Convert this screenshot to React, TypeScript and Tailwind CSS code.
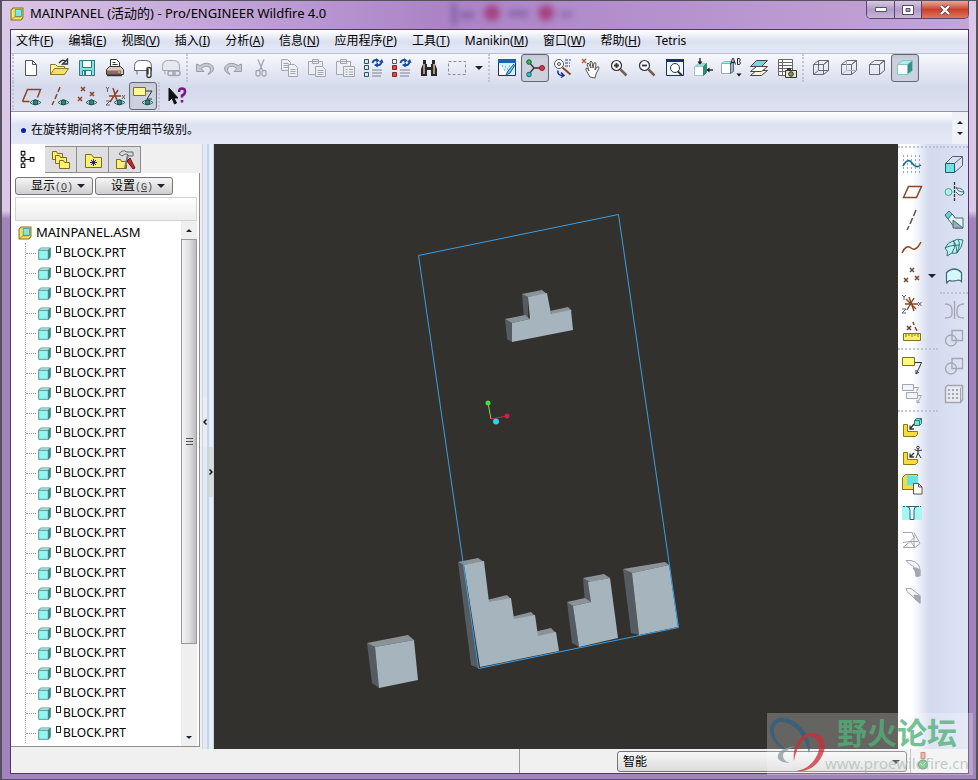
import type { ReactNode } from "react";
import clsx from "clsx";

const BROWN = "#8a4526";
const GRAY = "#a3a6ae";
const CYAN = "#a5f3ef";
const TEAL = "#2b7a78";

function Icon({ children, size = 20 }: { children: ReactNode; size?: number }) {
  return (
    <svg width={size} height={size} viewBox="0 0 20 20" fill="none" stroke="#333" className="shrink-0 overflow-visible" aria-hidden="true">
      {children}
    </svg>
  );
}

const Eye = () => (
  <g>
    <path d="M9 16.500q5-5 11 0q-6 4.500-11 0z" fill="#e8f5f3" stroke="#2e6660" />
    <circle cx="14.500" cy="16.300" r="2.400" fill="#2b8a80" stroke="#164640" />
  </g>
);

const X = ({ x, y, c = BROWN, r = 2 }: { x: number; y: number; c?: string; r?: number }) => (
  <path d={`M${x - r} ${y - r}l${2 * r} ${2 * r}M${x + r} ${y - r}l${-2 * r} ${2 * r}`} stroke={c} strokeWidth="1.500" />
);

const Cube = ({ front = "none", side = "none", top = "none", c = "#666a74" }: { front?: string; side?: string; top?: string; c?: string }) => (
  <g stroke={c} strokeLinejoin="round">
    <path d="M2.500 6.500h10v10h-10z" fill={front} />
    <path d="M2.500 6.500l5-4h10l-5 4z" fill={top} />
    <path d="M12.500 6.500l5-4v10l-5 4z" fill={side} />
  </g>
);

const Refresh = () => (
  <g stroke="#174a9c" strokeWidth="2">
    <path d="M9.500 5q1-4 5-2.500M18.500 3.500q-.5 4.500-5 3.500" />
    <path d="M13 0l3.500 2.500-3 2.500zM15 4.500L11 7l3.500 2.500z" fill="#174a9c" stroke="none" />
    <path d="M16 4l3-3 1.500 4z" fill="#174a9c" stroke="none" />
  </g>
);

const Lens = ({ children }: { children?: ReactNode }) => (
  <g>
    <path d="M11.500 11.500l6 6" stroke="#6f6256" strokeWidth="2.500" />
    <circle cx="7.500" cy="7.500" r="5" fill="#f8fbff" stroke="#333" strokeWidth="1.200" />
    {children}
  </g>
);

const icons: Record<string, ReactNode> = {
  new: <path d="M4.500 2.500h7l4 4v11h-11zM11.500 2.500v4h4" fill="#fff" stroke="#555" />,
  open: (
    <g>
      <path d="M1.500 16.500v-10h5l2 2h7v8z" fill="#fff3a0" stroke="#8b7824" />
      <path d="M1.500 16.500l4-6h14l-4 6z" fill="#f6df61" stroke="#8b7824" />
      <path d="M10 5q4-5 7-1M18.500 1v5h-5z" strokeWidth="1.300" />
    </g>
  ),
  save: (
    <g stroke="#2e7c83">
      <path d="M2.500 2.500h15v15h-15z" fill="#8be0e4" />
      <path d="M5.500 2.500h9v7h-9z" fill="#f8ffff" />
      <path d="M5.500 12.500h9v5h-9z" fill="#dff" />
      <path d="M8 13v4" strokeWidth="2" />
    </g>
  ),
  print: (
    <g>
      <path d="M5.500 9.500v-8h6l3 3v5zM7.500 4.500h3M7.500 6.500h5" fill="#fff" />
      <path d="M1.500 11.500l3-3h11l3 3v5h-17z" fill="#d9c8bd" />
      <path d="M2 12.500h14v4h-14z" fill="#8d6a62" stroke="none" />
      <path d="M2 17.500h15" strokeWidth="1.500" />
      <path d="M13 14h2" stroke="#f7d36c" />
    </g>
  ),
  mail: (
    <g>
      <path d="M1.500 12.500v-4q0-6 6-6h5q6 0 6 6v4z" fill="#fff" stroke="#666" />
      <path d="M4 12.500v4" stroke="#666" />
      <path d="M14 9.500v8q0 2 2 2t2-2v-6q0-2-2-2t-1 2v5" strokeWidth="1.300" fill="#fff" />
    </g>
  ),
  mailLink: (
    <g stroke={GRAY}>
      <path d="M1.500 12.500v-4q0-6 6-6h5q6 0 6 6v4z" fill="#e6e9f2" />
      <path d="M4 12.500v4" />
      <rect x="7" y="13" width="7" height="4.500" rx="2" strokeWidth="1.500" />
      <rect x="12" y="13" width="7" height="4.500" rx="2" strokeWidth="1.500" />
    </g>
  ),
  undo: <path d="M1.500 6v7.500h7.500l-3-3q5-4 9-1 2 3-2 7 7-3 5-8-5-6-13-1z" fill="#c6c9d2" stroke="#9a9da6" />,
  redo: <path d="M18.500 6v7.500h-7.500l3-3q-5-4-9-1-2 3 2 7-7-3-5-8 5-6 13-1z" fill="#c6c9d2" stroke="#9a9da6" />,
  cut: (
    <g stroke={GRAY} strokeWidth="1.300">
      <path d="M7 1.500l4.500 11M13 1.500l-4.500 11" />
      <rect x="5" y="12.500" width="4" height="5.500" rx="1.500" />
      <rect x="11" y="12.500" width="4" height="5.500" rx="1.500" />
    </g>
  ),
  copy: (
    <g stroke={GRAY} fill="#eceef4">
      <path d="M2.500 1.500h6l3 3v8h-9zM4.500 5.500h5M4.500 7.500h5M4.500 9.500h5" />
      <path d="M9.500 6.500h6l3 3v9h-9zM11.500 11.500h5M11.500 13.500h5M11.500 15.500h5" />
    </g>
  ),
  paste: (
    <g stroke={GRAY} fill="#eceef4">
      <path d="M1.500 3.500h14v13h-14zM5.500 1.500h6v4h-6z" />
      <path d="M8.500 8.500h7l3 3v7h-10zM10.500 12.500h6M10.500 14.500h6M10.500 16.500h6" />
    </g>
  ),
  pasteSpecial: (
    <g stroke={GRAY} fill="#eceef4">
      <path d="M1.500 3.500h14v13h-14zM5.500 1.500h6v4h-6z" />
      <path d="M8.500 8.500h11v10h-11zM10.500 11.500h2M14 11.500h4M10.500 14h2M14 14h4M10.500 16.500h2M14 16.500h4" />
    </g>
  ),
  regen: (
    <g>
      <path d="M1.500 1.500h4v4h-4zM1.500 7.500h4v4h-4zM1.500 14.500h4v4h-4z" fill="#c6f0f2" stroke="#35505c" />
      <path d="M9 12h10M9 15h10M9 18h9" stroke="#7d828e" />
      <Refresh />
    </g>
  ),
  regenRed: (
    <g>
      <path d="M1.500 1.500h4v4h-4z" fill="#fff" stroke="#555" />
      <path d="M1.500 7.500h4v4h-4zM1.500 14.500h4v4h-4z" fill="#e64848" stroke="#8c2222" />
      <path d="M9 12h10M9 15h10M9 18h9" stroke="#7d828e" />
      <Refresh />
    </g>
  ),
  find: (
    <g fill="#2a2724" stroke="none">
      <path d="M4 2h3v4h1v3h4V6h1V2h3v4l2 5v7h-6v-6H8v6H2v-7l2-5z" />
      <path d="M5 6v10M15 6v10" stroke="#c8bda4" strokeWidth="1.500" />
    </g>
  ),
  select: <path d="M1.500 3.500h17v13h-17z" stroke="#8a8e99" strokeDasharray="3 2" />,
  repaint: (
    <g>
      <path d="M1.500 1.500h17v16h-17z" fill="#d5f1fa" stroke="#12356e" />
      <path d="M1 1h18v4h-18z" fill="#1f5fb8" stroke="none" />
      <path d="M2 17V6l9 11z" fill="#fff" stroke="none" />
      <path d="M5 8h1M8 9h1M7 12h1M10 11h1M12 8h1" stroke="#2b91c8" />
      <path d="M17 6l-6 7-2 4 4-2 5-8" fill="#70c6dd" stroke="#155a92" />
    </g>
  ),
  spin: (
    <g>
      <path d="M4 4l5 6-5 6M9 10h8" stroke="#333" strokeWidth="1.300" />
      <circle cx="4" cy="4" r="2.300" fill="#38b558" stroke="#176032" />
      <circle cx="4" cy="16.500" r="2.300" fill="#2dc5ba" stroke="#176a60" />
      <circle cx="17" cy="10" r="2.500" fill="#df3345" stroke="#831d2a" />
    </g>
  ),
  orient: (
    <g>
      <circle cx="6" cy="6" r="4.500" fill="#fff" stroke="#555" />
      <circle cx="6" cy="6" r="1.500" stroke="#444" />
      <path d="M9.500 9.500l8 7" stroke="#8a4526" strokeWidth="2" />
      <path d="M12 2h6M12 5h5M12 8h5" stroke="#1d3fa5" strokeDasharray="3 1" />
      <path d="M5 12.500q-1 5 5 5M8 14.500l3 3-3 2" stroke="#1c2d8e" strokeWidth="1.500" />
    </g>
  ),
  pan: (
    <g>
      <X x={3} y={3} c="#b56235" />
      <path d="M9 19l-4-7q-1-3 2-1l1 2-2-7q1-2 2 0l2 4-1-6q1-2 2 0l1 6 1-5q2-1 2 1l-1 6 2-3q2-1 2 1l-3 6-1 4z" fill="#fff" stroke="#5c5550" />
    </g>
  ),
  zoomIn: <Lens><path d="M5 7.500h5M7.500 5v5" strokeWidth="1.800" /></Lens>,
  zoomOut: <Lens><path d="M5 7.500h5" strokeWidth="1.800" /></Lens>,
  refit: (
    <g>
      <path d="M1.500 1.500h17v16h-17z" fill="#edf7fb" stroke="#1d2f56" />
      <path d="M1 1h18v3h-18z" fill="#1b2f68" stroke="none" />
      <circle cx="10" cy="10" r="4.500" fill="#fff" />
      <path d="M13 13.500l4 4" strokeWidth="2" />
    </g>
  ),
  orientFace: (
    <g>
      <path d="M2 8.500l3-3h8l-3 3z" fill="#9fdcd9" stroke="#8cc" />
      <path d="M1.500 8.500h9v9h-9z" fill="#fff" stroke="#9cc6c8" />
      <path d="M10.500 8.500l3-3v9l-3 3z" fill="#298b78" stroke="#298b78" />
      <path d="M7 0v5M20 12h-5" strokeWidth="1.500" />
      <path d="M4.500 3.500h5L7 6.500zM16.500 9.500v5L13.500 12z" fill="#111" stroke="none" />
    </g>
  ),
  views: (
    <g>
      <path d="M.5 5.500l3-2h8l-3 2z" fill={CYAN} stroke="#7bb9bc" />
      <path d="M.5 5.500h9v10h-9z" fill="#fff" stroke="#9ab" />
      <path d="M9.500 5.500l3-2v10l-3 2z" fill="#9cb8c1" stroke="#667" />
      <path d="M9.500 6.500l2-6h1l2 6M10.500 4.500h3M16.500.5v6h2q2-1.500 0-3 1.500-1.500 0-3z" stroke="#222" />
      <path d="M15.500 15.500h5l-2.500 3z" fill="#111" stroke="none" />
    </g>
  ),
  layers: (
    <g strokeLinejoin="round" stroke="#444">
      <path d="M1.500 17.500h11l6-5h-11z" fill="#fff9d8" />
      <path d="M1.500 13.500h11l6-5h-11z" fill="#fff" />
      <path d="M1.500 8.500h11l6-6h-11z" fill="#6fdcd8" />
    </g>
  ),
  viewMgr: (
    <g>
      <path d="M1.500 1.500h14v16h-14zM5.500 1.500v16M1.500 4.500h14M1.500 7.500h14M1.500 10.500h14M1.500 13.500h14" fill="#fff" stroke="#666" />
      <path d="M8.500 12.500h11v7h-11z" fill="#e8e5c3" />
      <path d="M10 11h4" strokeWidth="2" />
      <circle cx="14" cy="16" r="2.300" fill="#8b916b" />
    </g>
  ),
  wireframe: (
    <g>
      <Cube />
      <path d="M2.500 16.500l5-4h10M7.500 12.500v-10" stroke="#666a74" />
    </g>
  ),
  hiddenLine: (
    <g>
      <Cube />
      <path d="M2.500 16.500l5-4h10M7.500 12.500v-10" stroke="#b0b4bf" />
    </g>
  ),
  noHidden: <Cube />,
  shaded: <Cube front="#fff" side="#2f9187" top={CYAN} c="#8dc2c2" />,
  planes: (
    <g>
      <path d="M1.500 15.500l5-12h13l-3 8M1.500 15.500h7" stroke={BROWN} strokeWidth="1.500" />
      <Eye />
    </g>
  ),
  axes: (
    <g>
      <path d="M11 1L9 6M8 8l-2 5M5 15l-2 4" stroke={BROWN} strokeWidth="1.500" />
      <Eye />
    </g>
  ),
  points: (
    <g>
      <X x={6} y={3} />
      <X x={15} y={8} />
      <X x={3} y={13} />
      <Eye />
    </g>
  ),
  csys: (
    <g>
      <path d="M1 1l1.500 2L4 1M2.500 3v3M1 15h4l-4 4h4M17 9l3 4M20 9l-3 4" stroke="#5b6270" />
      <path d="M4 10h12M8 2l5 16M13 4L5 16" stroke={BROWN} strokeWidth="1.500" />
      <Eye />
    </g>
  ),
  notes: (
    <g>
      <path d="M.5 1.500h12v8h-12z" fill="#fff796" stroke="#77702c" />
      <path d="M13 5h6l-5 8h5" stroke="#333" />
      <Eye />
    </g>
  ),
  help: (
    <g>
      <path d="M2 2v13l3-3 2.500 6 2-1-2.500-5h4z" fill="#111" stroke="#111" />
      <path d="M12 6q0-3.500 3-3.500t3 3-3 4v2M15 14v2.500" stroke="#7a1686" strokeWidth="2.500" />
    </g>
  ),
  sketch: (
    <g>
      <path d="M1 2h18M1 6h18M1 10h18M1 14h18M1 18h18" stroke="#2a5f96" strokeDasharray="1 3" />
      <path d="M1 12q5-9 9-3t9 2" stroke="#176d8f" strokeWidth="1.600" />
    </g>
  ),
  plane: <path d="M1.500 15.500l5-11h13l-5 11z" stroke={BROWN} strokeWidth="1.500" />,
  axis: <path d="M14 0l-2.500 6M10.500 8L8 14M7 16l-2 4" stroke="#6a4a3a" strokeWidth="1.500" />,
  curve: <path d="M0 15q4-9 9-5t10-6" stroke={BROWN} strokeWidth="1.500" />,
  point: (
    <g>
      <X x={10} y={4} c="#6a4a3a" />
      <X x={4} y={14} c="#6a4a3a" />
      <X x={15} y={12} />
    </g>
  ),
  coord: (
    <g>
      <path d="M0 1l2 2 2-2M2 3v3M0 15h4l-4 4h4M16 8l3.500 4M19.500 8l-3.500 4" stroke="#5b6270" />
      <path d="M3 10h13M7 3l5 14M12 4L5 16M4 5l10 10" stroke={BROWN} strokeWidth="1.400" />
    </g>
  ),
  analysis: (
    <g>
      <X x={7} y={6} c="#6a3d24" />
      <path d="M11 0l1 3M13 5l2 4" stroke={BROWN} strokeWidth="1.500" />
      <path d="M1.500 11.500h17v7h-17z" fill="#ffef6b" stroke="#7c712a" />
      <path d="M4 12v3M7 12v2M10 12v3M13 12v2M16 12v3" stroke="#7c712a" />
    </g>
  ),
  note: (
    <g>
      <path d="M.5 1.500h12v8h-12z" fill="#fff977" stroke="#77702c" />
      <path d="M12.500 6.500h7l-5 11M14 14v4l3-2" />
    </g>
  ),
  refs: (
    <g stroke={GRAY}>
      <path d="M.5.5h11v6h-11zM4.500 8.500h11v6h-11z" fill="#f2f4fb" />
      <path d="M11.500 3.500h5l-2 4M15.500 11.500h4l-4 7M15 16v3l3-1" />
    </g>
  ),
  assemble: (
    <g>
      <path d="M1.500 6.500h4v7h10v3l-2 2h-12z" fill="#f7dd3c" stroke="#8a771c" />
      <path d="M12 6l-4 5M8 7.500v3.500h4" strokeWidth="1.300" />
      <path d="M12.500 2.500l2-2h5v5l-2 2h-5zM12.500 2.500h5v5M17.500 2.500l2-2" fill="#7be0dc" stroke={TEAL} />
    </g>
  ),
  manikin: (
    <g>
      <path d="M1.500 6.500h4v7h10v3l-2 2h-12z" fill="#f7dd3c" stroke="#8a771c" />
      <path d="M12 7l-4 4M8 7.500v3.500h4" strokeWidth="1.300" />
      <circle cx="16" cy="1.500" r="1.300" />
      <path d="M16 3v4M12.500 3.500l3.500 1.500 4-1M16 7l-2 5M16 7l3 5" />
    </g>
  ),
  create: (
    <g>
      <path d="M.5 15.500v-12l3-3h12v11l-3 4z" fill="#f7dd3c" stroke="#8a771c" />
      <path d="M5 2h11v9h-11z" fill="#69e0e8" stroke="none" />
      <path d="M11.500 9.500h5l3.500 3.500v7h-8.500zM16.500 9.500v3.500h3.500" fill="#fff" stroke="#555" />
    </g>
  ),
  mold: (
    <g>
      <path d="M0 4h20v14h-20z" fill="#a8f5f4" stroke="none" />
      <path d="M5 4.500q3 0 3 4v9h4v-9q0-4 3-4z" fill="#dffcff" stroke="#306076" />
      <path d="M1 4.500h4M15 4.500h4" stroke="#306076" strokeDasharray="2 1" />
    </g>
  ),
  draft: <path d="M1 2.500h9l2 5-4 4-7 1M1 17.500h12l5-4-6-11M12 5v12M8 11l5 6M1 17.500l7-6h8" stroke={GRAY} />,
  round: (
    <g stroke={GRAY}>
      <path d="M4 2.500h5q9 2 9 10v5l-4 1q1-10-6-12z" fill="#f4f5fb" />
      <path d="M11 10q3-1 7 2v6h-4q0-5-3-8z" fill="#a5a8b0" />
    </g>
  ),
  chamfer: (
    <g stroke={GRAY}>
      <path d="M4 2.500h5l9 7v8l-4-4-9-8z" fill="#f4f5fb" />
      <path d="M12 9l6 1v7l-5-4z" fill="#a5a8b0" />
    </g>
  ),
  extrude: (
    <g>
      <path d="M1.500 9.500h9v9h-9z" fill="#6ee4e4" stroke="#1f5b66" />
      <path d="M1.500 9.500l7-7h10v9l-8 7M10.500 9.500l8-7" stroke="#566271" />
    </g>
  ),
  revolve: (
    <g>
      <path d="M10.500 0v20" strokeDasharray="3 1" strokeWidth="1.300" />
      <circle cx="4.500" cy="10" r="3.500" fill={CYAN} stroke="#67979c" />
      <path d="M12 6q8 0 8 5-1 3-5 2l-3-3M12 5q1 5 8 5" fill="#d7f6f6" stroke="#476774" />
    </g>
  ),
  sweep: (
    <g stroke="#4d6b75">
      <path d="M1 5l4-4 5 5 1 2h8v10h-8l-7-9z" fill="#e2f2f4" />
      <path d="M1 5l4-4 3 3-4 5z" fill="#5fd5d7" />
      <path d="M9 10l10 8H9z" fill="#a0adb4" />
    </g>
  ),
  boundary: (
    <g stroke="#33707b">
      <path d="M1 10q3-6 8-7 4-3 10-1-1 8-6 13-6-1-10 3 2-5-2-8z" fill="#bdf3f2" />
      <path d="M9 3q3 1 4 12M1 10q5-3 15-3M14 2q3 3-1 13M8 15q4-5 2-12" />
    </g>
  ),
  style: <path d="M2.500 17.500v-11q8-7 15 0v9q-2-2-5-1-4 1-7 0-2 1-3 3z" fill="#d5f9f8" stroke="#446876" strokeWidth="1.200" />,
  mirror: <path d="M10.500 1v18M1 4q7 0 7 6v4q0 4-7 4M20 4q-7 0-7 6v4q0 4 7 4" stroke={GRAY} strokeWidth="1.300" />,
  merge: (
    <g stroke={GRAY} strokeWidth="1.300">
      <circle cx="7" cy="12.500" r="5.500" />
      <path d="M8 2.500h10.500v10h-10.500z" />
    </g>
  ),
  pattern: (
    <g stroke={GRAY}>
      <path d="M1.500 3.500l2-2h15v14l-2 3h-15z" fill="#e8eaf1" strokeWidth="1.500" />
      <path d="M16.500 3.500v15" />
      <path d="M4 6h11M4 10h11M4 14h11" strokeWidth="2" strokeDasharray="2 2" />
    </g>
  ),
  tree: <path d="M2.500 1.500h4v4h-4zM2.500 8.500h4v4h-4zM2.500 15.500h4v4h-4zM12.500 8.500h4v4h-4zM4.500 5.500v3M4.500 12.500v3M6.500 10.500h6" stroke="#111" strokeWidth="1.200" />,
  folders: (
    <g fill="#fff06d" stroke="#7b6b24">
      <path d="M1.500 9.500v-8h4l1 2h5v6z" />
      <path d="M4.500 13.500v-8h4l1 2h6v6z" />
      <path d="M8.500 18.500v-8h4l1 2h5v6z" />
    </g>
  ),
  favorites: (
    <g>
      <path d="M2.500 17.500v-13h6l2 3h8v10z" fill="#fff06d" stroke="#7b6b24" />
      <path d="M10.500 9v7M7 12.500h7M8 10l5 5M13 10l-5 5" stroke="#202860" />
    </g>
  ),
  tools: (
    <g>
      <path d="M1.500 18.500v-9h4l1 2h5v7z" fill="#fff06d" stroke="#7b6b24" />
      <path d="M4 4q3-5 8-2h6v4h-4l-2-2q-3 0-5 2z" fill="#d7d9de" stroke="#66696f" />
      <path d="M13 5l-3 13" stroke="#777" strokeWidth="2" />
      <path d="M12 11l3-3 5 10-2 1z" fill="#c62828" stroke="#6c1717" />
    </g>
  ),
  assembly: (
    <g>
      <path d="M1.500 18.500v-14l3-3h14v14l-3 3z" fill="#f8e45c" stroke="#85731f" strokeWidth="1.500" />
      <path d="M7.500 3.500h9v10h-9z" fill="#7fe6e7" stroke="#35868a" />
      <path d="M2 18l5-4h9" stroke="#85731f" />
    </g>
  ),
  part: (
    <g strokeLinejoin="round" stroke="#4a8a8a" strokeWidth="1.300">
      <path d="M1 5l3-3.500h15L16 5z" fill="#dcfffc" />
      <path d="M1 5h15v14H1z" fill="#92f5ef" />
      <path d="M16 5l3-3.500v14L16 19z" fill="#2f7f78" />
    </g>
  ),
};

type Tool = { icon: string; label: string; active?: boolean; menu?: boolean };

const t = (icon: string, label: string, extra: Partial<Tool> = {}): Tool => ({ icon, label, ...extra });

const topRow: Tool[][] = [
  [t("new", "新建"), t("open", "打开"), t("save", "保存"), t("print", "打印"), t("mail", "发送邮件"), t("mailLink", "发送链接")],
  [
    t("undo", "撤消"),
    t("redo", "重做"),
    t("cut", "剪切"),
    t("copy", "复制"),
    t("paste", "粘贴"),
    t("pasteSpecial", "选择性粘贴"),
    t("regen", "再生"),
    t("regenRed", "再生管理器"),
    t("find", "查找"),
    t("select", "选取", { menu: true }),
  ],
  [
    t("repaint", "重画"),
    t("spin", "旋转中心", { active: true }),
    t("orient", "定向模式"),
    t("pan", "平移"),
    t("zoomIn", "放大"),
    t("zoomOut", "缩小"),
    t("refit", "重新调整"),
    t("orientFace", "重定向"),
    t("views", "已命名视图"),
    t("layers", "层"),
    t("viewMgr", "视图管理器"),
  ],
  [t("wireframe", "线框"), t("hiddenLine", "隐藏线"), t("noHidden", "无隐藏线"), t("shaded", "着色", { active: true })],
];

const secondRow: Tool[][] = [
  [t("planes", "显示平面"), t("axes", "显示轴"), t("points", "显示点"), t("csys", "显示坐标系"), t("notes", "显示注释", { active: true })],
  [t("help", "帮助")],
];

const featureTools: Tool[][] = [
  [
    t("sketch", "草绘"),
    t("plane", "平面"),
    t("axis", "轴"),
    t("curve", "曲线"),
    t("point", "点", { menu: true }),
    t("coord", "坐标系"),
    t("analysis", "分析"),
  ],
  [t("note", "注释"), t("refs", "参照")],
  [
    t("assemble", "装配"),
    t("manikin", "人体模型"),
    t("create", "创建"),
    t("mold", "孔"),
    t("draft", "拔模"),
    t("round", "倒圆角"),
    t("chamfer", "倒角"),
  ],
];

const shapeTools: Tool[][] = [
  [t("extrude", "拉伸"), t("revolve", "旋转"), t("sweep", "扫描"), t("boundary", "边界混合"), t("style", "造型")],
  [t("mirror", "镜像"), t("merge", "合并"), t("merge", "修剪"), t("pattern", "阵列")],
];

const menus: [string, string][] = [
  ["文件", "F"],
  ["编辑", "E"],
  ["视图", "V"],
  ["插入", "I"],
  ["分析", "A"],
  ["信息", "N"],
  ["应用程序", "P"],
  ["工具", "T"],
  ["Manikin", "M"],
  ["窗口", "W"],
  ["帮助", "H"],
  ["Tetris", ""],
];

const blocks = Array.from({ length: 25 }, (_, i) => i);

const Triangle = ({ up = false, small = false }: { up?: boolean; small?: boolean }) => (
  <svg width={small ? 6 : 8} height={small ? 3 : 4} viewBox="0 0 8 4" fill="#1c2333" aria-hidden="true">
    <path d={up ? "M0 4h8L4 0z" : "M0 0h8L4 4z"} />
  </svg>
);

function ToolButton({ tool, narrow = false }: { tool: Tool; narrow?: boolean }) {
  return (
    <>
      <button
        aria-label={tool.label}
        className={clsx(
          "flex h-7 w-7 shrink-0 items-center justify-center rounded-[3px]",
          tool.active && "border border-[#646876] bg-[#cdd1de] shadow-inner"
        )}
      >
        <Icon>{icons[tool.icon]}</Icon>
      </button>
      {tool.menu && (
        <button aria-label={`${tool.label}菜单`} className={clsx("flex h-7 shrink-0 items-center justify-center", narrow ? "w-3" : "w-4")}>
          <Triangle />
        </button>
      )}
    </>
  );
}

function ToolRow({ groups }: { groups: Tool[][] }) {
  return (
    <div className="flex h-7">
      {groups.map((group, i) => (
        <div key={i} className="flex">
          <span className="mr-[3px] ml-px w-0.5 border-l-2 border-dotted border-[#c0c3d2]" />
          {group.map((tool) => (
            <ToolButton key={tool.label} tool={tool} />
          ))}
        </div>
      ))}
    </div>
  );
}

function ToolColumn({ groups }: { groups: Tool[][] }) {
  return (
    <div className="flex flex-col">
      {groups.map((group, i) => (
        <div key={i} className="flex flex-col">
          <span className="my-0.5 h-0.5 w-full border-t-2 border-dotted border-[#c0c3d2]" />
          {group.map((tool) => (
            <div key={tool.label} className="flex">
              <ToolButton tool={tool} narrow />
            </div>
          ))}
        </div>
      ))}
    </div>
  );
}

function TitleBar() {
  return (
    <header className="relative flex h-7 items-start bg-linear-to-r from-[#d9c5e6] via-[#ab83c6] via-45% to-[#c3a5d6]">
      <svg className="absolute top-0 left-[430px] h-7 w-36" viewBox="0 0 144 28" aria-hidden="true">
        <g className="opacity-80 blur-[3px]">
          <path d="M12 2h4v22h-4z" fill="#6d4c93" />
          <path d="M20 10h14v8h-14zM68 9h20v7h-20zM120 11h12v5h-12z" fill="#8361a5" />
          <circle cx="52" cy="12" r="8" fill="#a3326f" />
          <circle cx="106" cy="12" r="8" fill="#a3326f" />
        </g>
      </svg>
      <div className="relative flex h-[26px] items-center gap-1.5">
        <Icon size={14}>{icons.assembly}</Icon>
        <h1 className="text-[13px] whitespace-nowrap text-black">MAINPANEL (活动的) - Pro/ENGINEER Wildfire 4.0</h1>
      </div>
      <div className="relative ml-auto flex h-[18px] overflow-hidden rounded-b-[5px] border border-t-0 border-[#5b4470]">
        <button aria-label="最小化" className="flex w-7 items-center justify-center border-r border-[#5b4470] bg-linear-to-b from-[#d9c9e4] via-[#b19bc6] to-[#c9b5da]">
          <svg width="12" height="5" viewBox="0 0 12 5" aria-hidden="true">
            <path d="M.5.5h11v4H.5z" fill="#fff" stroke="#52506a" />
          </svg>
        </button>
        <button aria-label="最大化" className="flex w-[27px] items-center justify-center border-r border-[#5b4470] bg-linear-to-b from-[#d9c9e4] via-[#b19bc6] to-[#c9b5da]">
          <svg width="12" height="10" viewBox="0 0 12 10" aria-hidden="true">
            <path d="M.5.5h11v9H.5zM4 3.500h4v3H4z" fill="#fff" stroke="#52506a" fillRule="evenodd" />
          </svg>
        </button>
        <button aria-label="关闭" className="flex w-[46px] items-center justify-center bg-linear-to-b from-[#e5a99b] via-[#c9402c] to-[#e0775a]">
          <svg width="12" height="10" viewBox="0 0 12 10" aria-hidden="true">
            <path d="M2 1l8 8M10 1L2 9" stroke="#6a3c46" strokeWidth="4" />
            <path d="M2 1l8 8M10 1L2 9" stroke="#fff" strokeWidth="2.400" />
          </svg>
        </button>
      </div>
    </header>
  );
}

function ModelTree() {
  return (
    <aside className="flex w-[189px] shrink-0 flex-col bg-[#f0f0f0]">
      <div role="tablist" className="flex h-[29px] items-end">
        <button role="tab" aria-selected="true" aria-label="模型树" className="flex h-[29px] w-[34px] items-center justify-center bg-white">
          <Icon size={18}>{icons.tree}</Icon>
        </button>
        {[
          ["folders", "文件夹浏览器"],
          ["favorites", "收藏夹"],
          ["tools", "连接"],
        ].map(([icon, label]) => (
          <button key={icon} role="tab" aria-label={label} className="flex h-[27px] w-8 items-center justify-center border border-l-0 border-[#8d8d92] bg-[#dedee0]">
            <Icon>{icons[icon]}</Icon>
          </button>
        ))}
      </div>
      <div className="mb-0.5 flex min-h-0 flex-1 flex-col border-r border-b border-[#8d8d92] bg-white pt-1 pr-0.5 pl-1">
        <div className="flex gap-0.5">
          {[
            ["显示", "O"],
            ["设置", "G"],
          ].map(([name, key]) => (
            <button key={key} className="flex h-[18px] w-[78px] items-center justify-center gap-1 rounded-[3px] border border-[#77777b] bg-linear-to-b from-[#f5f5f5] to-[#cfcfd1] pl-2 text-[12px] text-black">
              <span className="whitespace-nowrap">
                {name}
                <span className="font-['Liberation_Mono',monospace] text-[10px] text-[#444]">
                  (<u>{key}</u>)
                </span>
              </span>
              <Triangle />
            </button>
          ))}
        </div>
        <div className="mt-0.5 h-6 shrink-0 border border-[#d3d3d6] bg-linear-to-b from-white to-[#ededee]" />
        <div className="flex min-h-0 flex-1">
          <div className="min-w-0 flex-1 overflow-hidden pt-0.5 text-[12px] text-black">
            <div className="flex h-5 items-center gap-1 pl-[3px] text-[13px]">
              <Icon size={14}>{icons.assembly}</Icon>
              MAINPANEL.ASM
            </div>
            <ul className="ml-2.5 border-l border-dotted border-[#9b9b9b]">
              {blocks.map((i) => (
                <li key={i} className="flex h-5 items-center">
                  <span className="mr-0.5 w-2.5 border-t border-dotted border-[#9b9b9b]" />
                  <Icon size={13}>{icons.part}</Icon>
                  <span className="mr-0.5 mb-2 ml-[5px] h-[7px] w-[5px] border border-[#222]" />
                  BLOCK.PRT
                </li>
              ))}
            </ul>
          </div>
          <div className="flex w-4 shrink-0 flex-col bg-[#efeff0]">
            <button aria-label="向上滚动" className="flex h-[18px] items-center justify-center">
              <Triangle up small />
            </button>
            <div className="flex flex-[403] items-center justify-center border border-[#98989c] bg-linear-to-r from-[#f4f4f4] via-[#e0e0e2] to-[#bcbcc0]">
              <svg width="7" height="8" viewBox="0 0 7 8" stroke="#555" aria-hidden="true">
                <path d="M0 .5h7M0 3.500h7M0 6.500h7" />
              </svg>
            </div>
            <div className="flex-[84]" />
            <button aria-label="向下滚动" className="flex h-[18px] items-center justify-center">
              <Triangle small />
            </button>
          </div>
        </div>
      </div>
    </aside>
  );
}

function Splitters() {
  return (
    <div className="flex w-[14px] shrink-0 bg-[#f0f0f0]">
      <div className="ml-0.5 flex w-1.5 flex-col border-x border-[#cdd3e6] bg-[#e4e9f5]">
        <div className="flex flex-1 items-end">
          <button aria-label="折叠模型树" className="flex h-[50px] w-1 items-center justify-center bg-[#ececf2]">
            <svg width="4" height="6" viewBox="0 0 4 6" fill="none" stroke="#111" strokeWidth="1.500" className="shrink-0" aria-hidden="true">
              <path d="M3.500.5L1 3l2.500 2.500" />
            </svg>
          </button>
        </div>
        <div className="flex-1" />
      </div>
      <div className="flex flex-1 flex-col border-x border-[#c3d3e6] bg-[#e2eefa]">
        <div className="flex-1" />
        <div className="flex flex-1 items-start">
          <button aria-label="展开浏览器" className="flex h-[50px] w-1 items-center justify-center bg-[#ddddd6]">
            <svg width="4" height="6" viewBox="0 0 4 6" fill="none" stroke="#111" strokeWidth="1.500" className="shrink-0" aria-hidden="true">
              <path d="M.5.5L3 3 .5 5.500" />
            </svg>
          </button>
        </div>
      </div>
    </div>
  );
}

function Viewport() {
  return (
    <main className="min-w-0 flex-1 bg-[#32312d]">
      <svg viewBox="214 144 684 605" className="h-full w-full" role="img" aria-label="MAINPANEL">
        {/* dark side faces */}
        <g fill="#555b60">
          <path d="M505 319l7 4v19l-5-3zM522 294l6 3v20l-4 2zM458 562l6 3 14 103-7-3z" />
          <path d="M567 602l6 4 6 41-7-4zM583 578l7 4 3 19-8 2zM623 569l9 4 7 62-8-2zM367 643l8 4 4 41-7-5z" />
        </g>
        {/* tops */}
        <g fill="#8b9399">
          <path d="M505 319l20-4 5 4-18 4zM522 294l20-4 5 4-19 3zM550 311l18-4 4 4-20 4zM458 562l20-4 6 4-20 3z" />
          <path d="M487 600l20-5 4 4-22 4zM511 617l20-5 4 4-22 4zM534 632l17-4 5 5-20 4z" />
          <path d="M567 602l18-4 6 4-18 4zM583 578l21-4 6 4-20 4zM623 569l42-7 4 3-37 8zM367 643l41-8 6 5-39 7z" />
        </g>
        {/* front faces */}
        <g fill="#a6b4be">
          <path d="M512 323l18-4-2-22 19-4 4 21 20-4 2 20-61 12z" />
          <path d="M464 565l20-4 5 41 22-4 3 21 21-4 3 21 18-4 3 19-79 16z" />
          <path d="M573 606l18-4-3-20 22-4 8 60-39 9zM632 573l37-8 9 62-39 8zM375 647l39-7 4 40-39 8z" />
        </g>
        <path d="M418.500 255.500l200-41 60 413-200 41z" fill="none" stroke="#3b9de3" />
        <path d="M491 419l-3-16" stroke="#7ddb48" />
        <path d="M491 419l16-3" stroke="#c32a45" />
        <circle cx="488" cy="403" r="2.500" fill="#3ce23c" />
        <circle cx="507" cy="416" r="2.500" fill="#d11f3d" />
        <circle cx="496" cy="421.500" r="3" fill="#25d6ee" />
      </svg>
    </main>
  );
}

function StatusBar() {
  return (
    <footer className="flex h-6 shrink-0 bg-[#f0f0f0]">
      <div className="min-w-0 flex-1" />
      <div className="w-[98px] shrink-0 border-l border-[#9a9a9e]" />
      <div className="relative mt-0.5 mb-px w-[290px] shrink-0">
        <select aria-label="过滤器" className="block h-full w-full appearance-none rounded-[3px] border border-[#737378] bg-linear-to-b from-[#f6f6f6] to-[#dcdcde] pl-[5px] text-[12px] leading-4 text-black">
          <option>智能</option>
        </select>
        <span className="pointer-events-none absolute inset-y-0 right-[7px] flex items-center">
          <Triangle />
        </span>
      </div>
      <div className="ml-[3px] flex w-[58px] shrink-0 items-center border-l border-[#b5b5ba] pl-0.5">
        <Icon>
          <path d="M8 1.500h4v6h-4z" fill="#eaa08f" stroke="#b96b5c" />
          <circle cx="10" cy="13.500" r="4.500" fill="#5cc56f" stroke="#2c7c3d" />
          <path d="M7.500 12.500l2 2 3-3" stroke="#e9ffe9" />
        </Icon>
      </div>
    </footer>
  );
}

function Watermark() {
  return (
    <div className="pointer-events-none absolute right-[3px] bottom-1 flex h-[62px] w-[206px] bg-white/25">
      <svg width="62" height="62" viewBox="0 0 62 62" fill="none" className="shrink-0 opacity-75" aria-hidden="true">
        <path d="M22 38C10 36 2 24 3 15 5 3 18 2 28 9c11 8 17 20 14 31-2-10-8-22-18-28C16 7 8 8 7 16c-1 8 5 17 15 22z" fill="#2d5f80" />
        <path d="M42 20c12-1 18 7 15 18-4 13-15 22-29 20 11-1 19-8 23-18 3-9 0-16-9-17-7 3-13 13-15 25-2-11 4-25 15-28z" fill="#cc2b36" />
        <path d="M29 33q-16 2-18 9t12 8q-8-3-7-8t13-9z" fill="#8997a3" />
      </svg>
      <div className="flex min-w-0 flex-1 flex-col pl-2">
        <span className="text-[30px] leading-10 font-bold whitespace-nowrap text-[#52b07a]/80">野火论坛</span>
        <span className="-ml-3 text-[15px] leading-5 whitespace-nowrap text-[#a9b8b4]/70">www.proewildfire.cn</span>
      </div>
    </div>
  );
}

export default function App() {
  return (
    <div className="relative flex h-screen w-full flex-col overflow-hidden border-x-2 border-t border-b border-[#57505f] bg-linear-to-b from-[#d9c8e6] from-27% to-[#a284bd] to-28% pr-[7px] pb-[5px] pl-2 font-['Noto_Sans','Noto_Sans_CJK_SC',sans-serif]">
      <TitleBar />
      <div className="flex min-h-0 flex-1 flex-col border border-[#50356a] bg-[#f0f0f0]">
        <nav className="flex h-6 shrink-0 items-center gap-[15px] border-b border-[#b9bfd2] bg-linear-to-b from-white via-[#dce1f0] via-50% to-[#e4e8f6] pb-px pl-[5px] text-[12px] text-black">
          {menus.map(([name, key]) => (
            <button key={name} className="whitespace-nowrap">
              {name}
              {key && (
                <>
                  (<u>{key}</u>)
                </>
              )}
            </button>
          ))}
        </nav>
        <div className="flex h-[58px] shrink-0 flex-col border-b border-[#9297a6] bg-linear-to-b from-[#f6f8fd] via-[#d4d9eb] via-60% to-[#dde1f1] pr-2">
          <ToolRow groups={topRow} />
          <ToolRow groups={secondRow} />
        </div>
        <div className="flex h-8 shrink-0 items-center bg-linear-to-b from-white via-[#dde2f2] via-40% to-[#e5e9f6]">
          <p className="flex flex-1 items-center gap-[5px] pt-1 pl-2.5 text-[12px] text-black">
            <span className="h-[5px] w-[5px] rounded-full bg-[#0b1fb4]" />
            在旋转期间将不使用细节级别。
          </p>
          <div className="flex h-full w-4 flex-col items-center justify-evenly bg-[#f0f1f5]">
            <button aria-label="上一条消息">
              <Triangle up small />
            </button>
            <button aria-label="下一条消息">
              <Triangle small />
            </button>
          </div>
        </div>
        <div className="flex min-h-0 flex-1">
          <ModelTree />
          <Splitters />
          <Viewport />
          <div className="flex w-[70px] shrink-0 justify-between bg-linear-to-r from-white from-20% via-[#d3daee] via-45% to-[#dde3f5]">
            <ToolColumn groups={featureTools} />
            <ToolColumn groups={shapeTools} />
          </div>
        </div>
        <StatusBar />
      </div>
      <Watermark />
    </div>
  );
}
